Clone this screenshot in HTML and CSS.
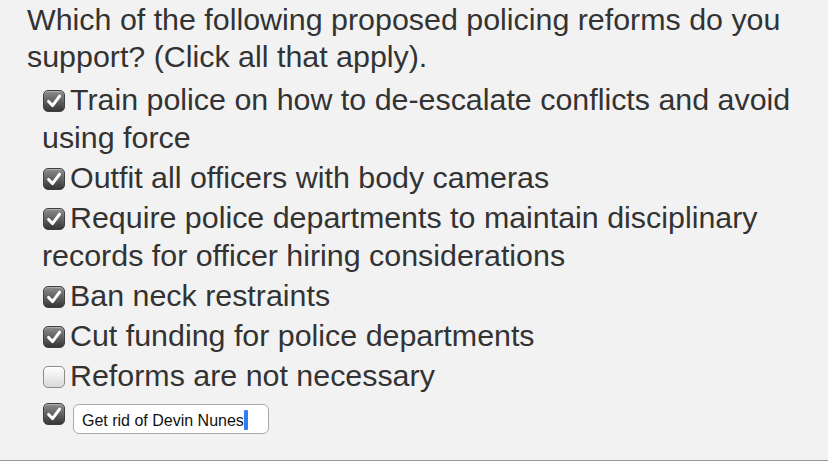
FILE: index.html
```html
<!DOCTYPE html>
<html>
<head>
<meta charset="utf-8">
<link rel="stylesheet" href="styles.css">
</head>
<body>
<div class="page">
  <p class="question">Which of the following proposed policing reforms do you support? (Click all that apply).</p>
  <div class="options">
    <div class="option"><span class="box checked"><svg viewBox="0 0 20 20"><path d="M4.6 10.4 L8.5 14.6 L15.6 5.2"/></svg></span>Train police on how to de-escalate conflicts and avoid using force</div>
    <div class="option"><span class="box checked"><svg viewBox="0 0 20 20"><path d="M4.6 10.4 L8.5 14.6 L15.6 5.2"/></svg></span>Outfit all officers with body cameras</div>
    <div class="option"><span class="box checked"><svg viewBox="0 0 20 20"><path d="M4.6 10.4 L8.5 14.6 L15.6 5.2"/></svg></span>Require police departments to maintain disciplinary records for officer hiring considerations</div>
    <div class="option"><span class="box checked"><svg viewBox="0 0 20 20"><path d="M4.6 10.4 L8.5 14.6 L15.6 5.2"/></svg></span>Ban neck restraints</div>
    <div class="option"><span class="box checked"><svg viewBox="0 0 20 20"><path d="M4.6 10.4 L8.5 14.6 L15.6 5.2"/></svg></span>Cut funding for police departments</div>
    <div class="option"><span class="box"></span>Reforms are not necessary</div>
    <div class="other">
      <span class="box checked big"><svg viewBox="0 0 20 20"><path d="M4.6 10.4 L8.5 14.6 L15.6 5.2"/></svg></span>
      <div class="field">Get rid of Devin Nunes<span class="caret"></span></div>
    </div>
  </div>
</div>
</body>
</html>
```
FILE: styles.css
```css
html, body {
  margin: 0;
  padding: 0;
  background: #f2f2f2;
}
.page {
  box-sizing: border-box;
  width: 828px;
  height: 461px;
  border-bottom: 1px solid #98989c;
  font-family: "Liberation Sans", Arial, sans-serif;
  color: #333333;
  overflow: hidden;
}
.question {
  margin: 0;
  padding: 1px 20px 0 27px;
  font-size: 30.4px;
  line-height: 37px;
}
.options {
  padding: 3px 20px 0 42px;
}
.option {
  font-size: 30.4px;
  line-height: 38px;
  padding-top: 2px;
}
.box {
  box-sizing: border-box;
  display: inline-block;
  width: 22px;
  height: 22px;
  margin: 0 5px 0 1px;
  vertical-align: -2px;
  border-radius: 5px;
  border: 1px solid #8c8c8c;
  background: linear-gradient(#ffffff, #d9d9d9);
  box-shadow: inset 0 1px 1px rgba(255,255,255,0.8);
}
.box.checked {
  border-color: #3e3e3e;
  background: linear-gradient(#8c8c8c, #363636);
  box-shadow: inset 0 1px 1px rgba(255,255,255,0.35);
}
.box svg {
  display: block;
  width: 100%;
  height: 100%;
}
.box svg path {
  fill: none;
  stroke: #ffffff;
  stroke-width: 3;
  stroke-linecap: round;
  stroke-linejoin: round;
}
.other {
  display: flex;
  align-items: flex-start;
  padding-top: 9px;
}
.box.big {
  margin: 0 8px 0 1px;
}
.field {
  box-sizing: border-box;
  width: 196px;
  height: 30px;
  margin-top: 1px;
  padding: 5px 0 0 8px;
  background: #ffffff;
  border: 1px solid #a9a9ad;
  border-radius: 6px;
  font-size: 16px;
  line-height: 19px;
  color: #111111;
}
.caret {
  display: inline-block;
  width: 4px;
  height: 20px;
  vertical-align: -4px;
  border-radius: 1px;
  background: #2f7cf6;
}
```
